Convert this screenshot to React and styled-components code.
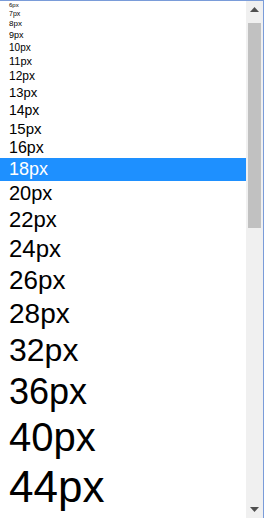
import React from "react";
import styled, { createGlobalStyle } from "styled-components";

const Global = createGlobalStyle`
  html, body { margin: 0; padding: 0; background: #ffffff; }
  body { font-family: "Liberation Sans", Arial, sans-serif; }
`;

const Frame = styled.div`
  width: 264px;
  height: 518px;
  box-sizing: border-box;
  border-top: 1px solid #7a9cd9;
  border-right: 1px solid #7a9cd9;
  display: flex;
  background: #ffffff;
  overflow: hidden;
`;

const List = styled.div`
  flex: 1;
  overflow: hidden;
  display: flex;
  flex-direction: column;
`;

const Option = styled.div`
  flex: none;
  font-family: "Liberation Sans", Arial, sans-serif;
  font-size: ${(p) => p.$size}px;
  line-height: normal;
  padding: 1px 9px;
  color: ${(p) => (p.$selected ? "#ffffff" : "#000000")};
  background: ${(p) => (p.$selected ? "#1e90ff" : "transparent")};
  white-space: nowrap;
`;

const Scrollbar = styled.div`
  width: 17px;
  flex: none;
  background: #f0f0f0;
  display: flex;
  flex-direction: column;
`;

const ArrowButton = styled.div`
  height: 17px;
  flex: none;
  display: flex;
  align-items: center;
  justify-content: center;
`;

const Track = styled.div`
  flex: 1;
  display: flex;
  flex-direction: column;
  padding: 5px 2px 0;
`;

const Thumb = styled.div`
  height: 205px;
  background: #c1c1c1;
`;

const Arrow = ({ down }) => (
  <svg width="9" height="5" viewBox="0 0 9 5">
    {down ? (
      <polygon points="0,0 9,0 4.5,5" fill="#505050" />
    ) : (
      <polygon points="0,5 9,5 4.5,0" fill="#505050" />
    )}
  </svg>
);

const sizes = [6, 7, 8, 9, 10, 11, 12, 13, 14, 15, 16, 18, 20, 22, 24, 26, 28, 32, 36, 40, 44];

export default function App() {
  return (
    <>
      <Global />
      <Frame>
        <List>
          {sizes.map((s) => (
            <Option key={s} $size={s} $selected={s === 18}>
              {s}px
            </Option>
          ))}
        </List>
        <Scrollbar>
          <ArrowButton>
            <Arrow />
          </ArrowButton>
          <Track>
            <Thumb />
          </Track>
          <ArrowButton>
            <Arrow down />
          </ArrowButton>
        </Scrollbar>
      </Frame>
    </>
  );
}
